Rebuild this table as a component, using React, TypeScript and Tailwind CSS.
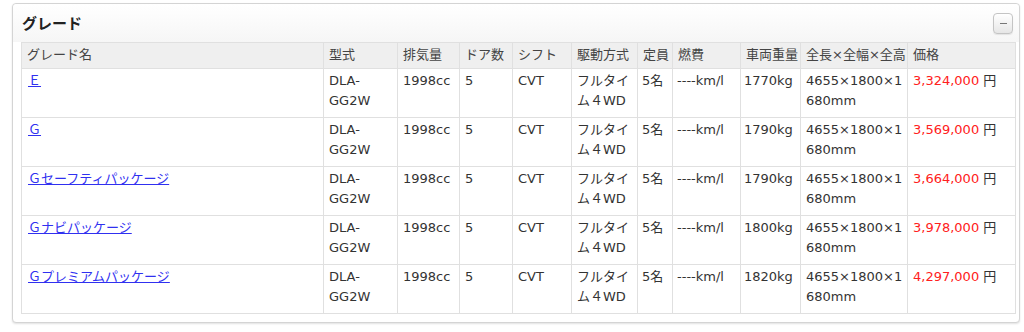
import React from "react";

const rows = [
  { name: "Ｅ", weight: "1770kg", price: "3,324,000" },
  { name: "Ｇ", weight: "1790kg", price: "3,569,000" },
  { name: "Ｇセーフティパッケージ", weight: "1790kg", price: "3,664,000" },
  { name: "Ｇナビパッケージ", weight: "1800kg", price: "3,978,000" },
  { name: "Ｇプレミアムパッケージ", weight: "1820kg", price: "4,297,000" },
];

const widths = [302, 74, 62, 53, 59, 66, 35, 68, 60, 107, 108];
const heads = ["グレード名", "型式", "排気量", "ドア数", "シフト", "駆動方式", "定員", "燃費", "車両重量", "全長×全幅×全高", "価格"];

const font = { fontFamily: '"DejaVu Sans", "Noto Sans CJK JP", sans-serif' };

export default function App() {
  return (
    <div className="w-[1024px] h-[332px] bg-white pt-[3px] pl-[12px] overflow-hidden" style={font}>
      <div className="w-[1008px] rounded-[4px] border border-[#d4d4d4] shadow-[0_1px_2px_rgba(0,0,0,0.12)] bg-white pb-[8px]">
        <div className="h-[38px] flex items-start justify-between pl-[9px] pr-[6px] bg-gradient-to-b from-white to-[#f6f6f6] rounded-t-[4px]">
          <div className="mt-[8px] text-[15px] leading-[22px] font-bold text-[#222]" style={{ fontFamily: '"Noto Sans CJK JP", sans-serif' }}>
            グレード
          </div>
          <div className="mt-[9px] w-[20px] h-[21px] rounded-[4px] border border-[#c4c4c4] bg-gradient-to-b from-white to-[#e6e6e6] flex items-center justify-center shadow-[0_1px_1px_rgba(0,0,0,0.08)]">
            <div className="w-[7px] h-[1px] bg-[#777]" />
          </div>
        </div>
        <div className="pl-[8px]">
          <table className="table-fixed border-collapse w-[994px] text-[13px] leading-[20px] text-[#333]">
            <colgroup>
              {widths.map((w, i) => (
                <col key={i} style={{ width: w }} />
              ))}
            </colgroup>
            <thead>
              <tr className="bg-[#efefef]">
                {heads.map((h) => (
                  <th key={h} className="border border-[#e0e0e0] text-left font-normal align-top pl-[5px] pr-[2px] pt-[2px] pb-[3px] whitespace-nowrap text-[#444]">
                    {h}
                  </th>
                ))}
              </tr>
            </thead>
            <tbody>
              {rows.map((r) => (
                <tr key={r.name}>
                  <td className="border border-[#e0e0e0] align-top pl-[6px] pr-[4px] pt-[2px] pb-[6px]">
                    <a href="#" className="text-[#3030f0] underline">{r.name}</a>
                  </td>
                  <td className="border border-[#e0e0e0] align-top pl-[5px] pr-[2px] pt-[2px] pb-[6px]">DLA-<br />GG2W</td>
                  <td className="border border-[#e0e0e0] align-top pl-[5px] pr-[2px] pt-[2px] pb-[6px]">1998cc</td>
                  <td className="border border-[#e0e0e0] align-top pl-[5px] pr-[2px] pt-[2px] pb-[6px]">5</td>
                  <td className="border border-[#e0e0e0] align-top pl-[5px] pr-[2px] pt-[2px] pb-[6px]">CVT</td>
                  <td className="border border-[#e0e0e0] align-top pl-[5px] pr-[2px] pt-[2px] pb-[6px]">フルタイ<br />ム４WD</td>
                  <td className="border border-[#e0e0e0] align-top pl-[4px] pr-[1px] pt-[2px] pb-[6px] whitespace-nowrap">5名</td>
                  <td className="border border-[#e0e0e0] align-top pl-[4px] pr-[1px] pt-[2px] pb-[6px] whitespace-nowrap">----km/l</td>
                  <td className="border border-[#e0e0e0] align-top pl-[3px] pr-[1px] pt-[2px] pb-[6px] whitespace-nowrap">{r.weight}</td>
                  <td className="border border-[#e0e0e0] align-top pl-[5px] pr-[1px] pt-[2px] pb-[6px]">4655×1800×1<br />680mm</td>
                  <td className="border border-[#e0e0e0] align-top pl-[5px] pr-[2px] pt-[2px] pb-[6px] whitespace-nowrap">
                    <span className="text-[#ff2020]">{r.price}</span> 円
                  </td>
                </tr>
              ))}
            </tbody>
          </table>
        </div>
      </div>
    </div>
  );
}
